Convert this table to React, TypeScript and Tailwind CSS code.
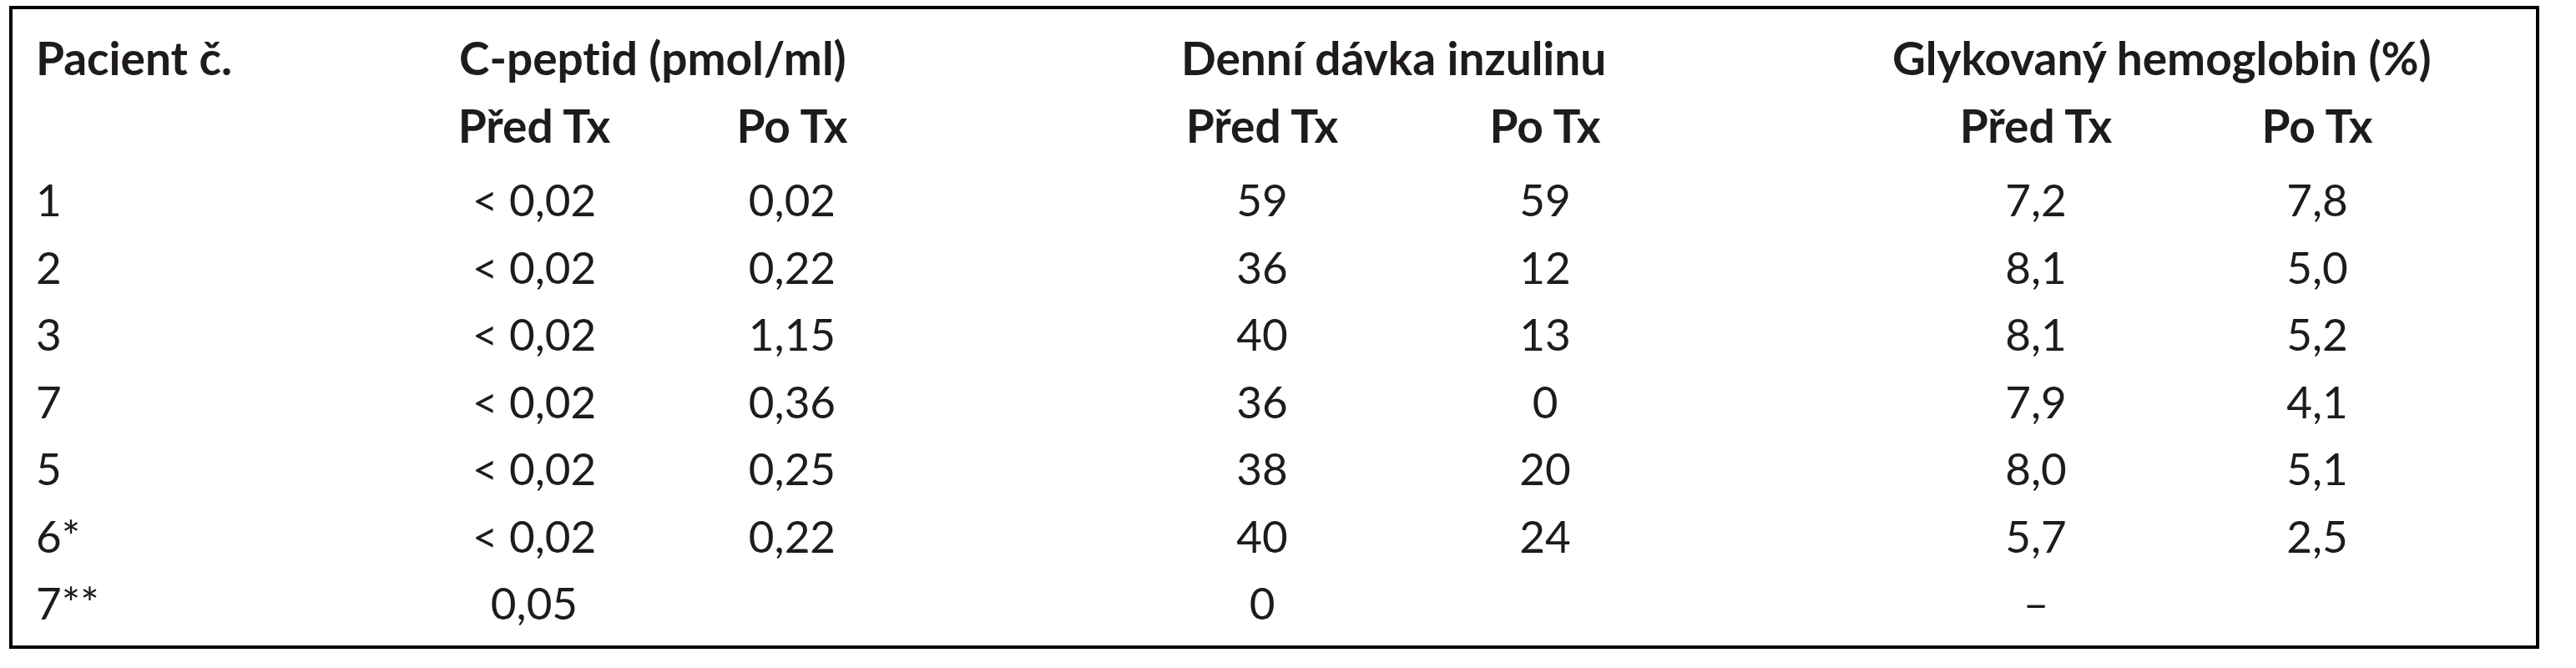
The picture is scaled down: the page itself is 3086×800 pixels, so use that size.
import React from "react";

const rows: [string, string, string, string, string, string, string][] = [
  ["1", "< 0,02", "0,02", "59", "59", "7,2", "7,8"],
  ["2", "< 0,02", "0,22", "36", "12", "8,1", "5,0"],
  ["3", "< 0,02", "1,15", "40", "13", "8,1", "5,2"],
  ["7", "< 0,02", "0,36", "36", "0", "7,9", "4,1"],
  ["5", "< 0,02", "0,25", "38", "20", "8,0", "5,1"],
  ["6*", "< 0,02", "0,22", "40", "24", "5,7", "2,5"],
  ["7**", "0,05", "", "0", "", "–", ""],
];

const cols =
  "grid grid-cols-[475px_300px_318px_254px_300px_378px_249px_300px_374px_1fr]";

export default function App() {
  return (
    <div className="w-[3086px] h-[800px] bg-white pt-[7px] pl-[11px]">
      <div
        className="w-[3031px] h-[770px] border-4 border-black text-[#1f1b1c] pt-[18px] [font-variant-ligatures:none]"
        style={{ fontFamily: "Lato, 'Open Sans', sans-serif" }}
      >
        <div className="grid grid-cols-[535px_865px_852px_1fr] font-bold text-[55px] leading-[81px] h-[81px]">
          <div className="pl-[28px]">Pacient č.</div>
          <div>C-peptid (pmol/ml)</div>
          <div>Denní dávka inzulinu</div>
          <div>Glykovaný hemoglobin (%)</div>
        </div>
        <div className={`${cols} font-bold text-[55px] leading-[81px] h-[81px]`}>
          <div />
          <div className="text-center">Před Tx</div>
          <div className="text-center">Po Tx</div>
          <div />
          <div className="text-center">Před Tx</div>
          <div className="text-center">Po Tx</div>
          <div />
          <div className="text-center">Před Tx</div>
          <div className="text-center">Po Tx</div>
          <div />
        </div>
        <div className="mt-[8px]">
          {rows.map((r, i) => (
            <div key={i} className={`${cols} text-[53px] leading-[80.5px] h-[80.5px]`}>
              <div className="pl-[28px]">{r[0]}</div>
              <div className="text-center">{r[1]}</div>
              <div className="text-center">{r[2]}</div>
              <div />
              <div className="text-center">{r[3]}</div>
              <div className="text-center">{r[4]}</div>
              <div />
              <div className="text-center">{r[5]}</div>
              <div className="text-center">{r[6]}</div>
              <div />
            </div>
          ))}
        </div>
      </div>
    </div>
  );
}
